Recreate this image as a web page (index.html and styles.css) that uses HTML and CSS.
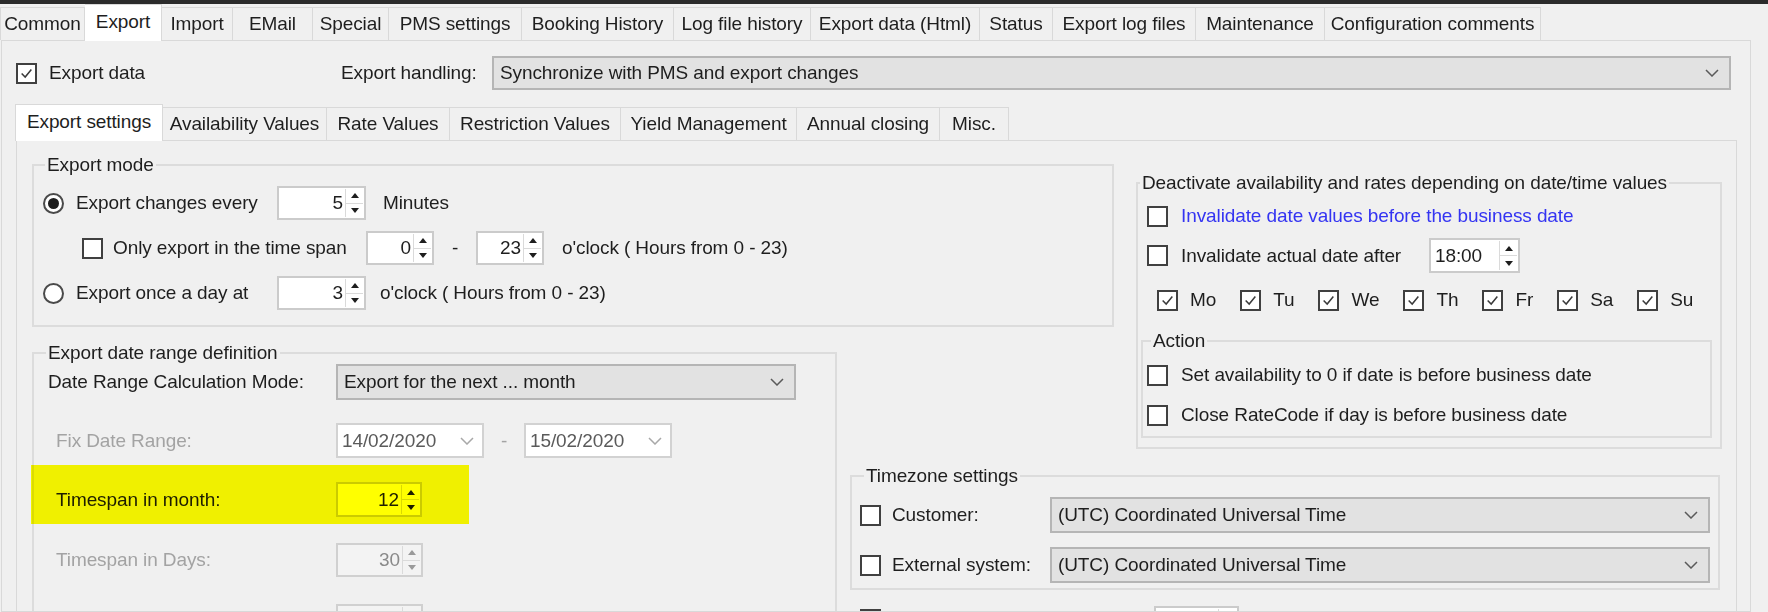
FILE: index.html
```html
<!DOCTYPE html>
<html>
<head>
<meta charset="utf-8">
<title>Export settings</title>
<link rel="stylesheet" href="styles.css">
</head>
<body>
<div class="topbar"></div>
<div class="tabs top">
  <div class="tab">Common</div>
  <div class="tab sel">Export</div>
  <div class="tab">Import</div>
  <div class="tab">EMail</div>
  <div class="tab">Special</div>
  <div class="tab">PMS settings</div>
  <div class="tab">Booking History</div>
  <div class="tab">Log file history</div>
  <div class="tab">Export data (Html)</div>
  <div class="tab">Status</div>
  <div class="tab">Export log files</div>
  <div class="tab">Maintenance</div>
  <div class="tab">Configuration comments</div>
</div>
<div class="outer">
  <div class="export-row">
    <div class="opt w-export"><span class="cb on"><svg viewBox="0 0 17 17"><path d="M3 8.5 L7 12.5 L14 4"/></svg></span><span>Export data</span></div>
    <span class="lbl-handling">Export handling:</span>
    <div class="combo grow"><span>Synchronize with PMS and export changes</span><svg class="chev" viewBox="0 0 14 8"><path d="M1 1 L7 7 L13 1"/></svg></div>
  </div>
  <div class="tabs sub">
    <div class="tab sel">Export settings</div>
    <div class="tab">Availability Values</div>
    <div class="tab">Rate Values</div>
    <div class="tab">Restriction Values</div>
    <div class="tab">Yield Management</div>
    <div class="tab">Annual closing</div>
    <div class="tab">Misc.</div>
  </div>
  <div class="inner">
    <div class="layout">
      <fieldset class="grp g-mode">
        <legend>Export mode</legend>
        <div class="body">
          <div class="line">
            <div class="opt w-mode"><span class="rb on"></span><span>Export changes every</span></div>
            <div class="spin w89"><span class="val">5</span><span class="arrows"><i class="up"></i><i class="dn"></i></span></div>
            <span class="after-min">Minutes</span>
          </div>
          <div class="line">
            <div class="opt w-span"><span class="cb"></span><span>Only export in the time span</span></div>
            <div class="spin w68"><span class="val">0</span><span class="arrows"><i class="up"></i><i class="dn"></i></span></div>
            <span class="dash">-</span>
            <div class="spin w68"><span class="val">23</span><span class="arrows"><i class="up"></i><i class="dn"></i></span></div>
            <span class="after-span">o'clock ( Hours from 0 - 23)</span>
          </div>
          <div class="line">
            <div class="opt w-mode"><span class="rb"></span><span>Export once a day at</span></div>
            <div class="spin w89"><span class="val">3</span><span class="arrows"><i class="up"></i><i class="dn"></i></span></div>
            <span class="after-day">o'clock ( Hours from 0 - 23)</span>
          </div>
        </div>
      </fieldset>

      <fieldset class="grp g-deact">
        <legend>Deactivate availability and rates depending on date/time values</legend>
        <div class="body">
          <div class="dline h26">
            <div class="opt"><span class="cb"></span><span class="blue">Invalidate date values before the business date</span></div>
          </div>
          <div class="dline h35 mt9">
            <div class="opt w-inv"><span class="cb"></span><span>Invalidate actual date after</span></div>
            <div class="spin w91 left"><span class="val">18:00</span><span class="arrows"><i class="up"></i><i class="dn"></i></span></div>
          </div>
          <div class="dline days h26 mt14">
            <div class="opt"><span class="cb on"><svg viewBox="0 0 17 17"><path d="M3 8.5 L7 12.5 L14 4"/></svg></span><span>Mo</span></div>
            <div class="opt"><span class="cb on"><svg viewBox="0 0 17 17"><path d="M3 8.5 L7 12.5 L14 4"/></svg></span><span>Tu</span></div>
            <div class="opt"><span class="cb on"><svg viewBox="0 0 17 17"><path d="M3 8.5 L7 12.5 L14 4"/></svg></span><span>We</span></div>
            <div class="opt"><span class="cb on"><svg viewBox="0 0 17 17"><path d="M3 8.5 L7 12.5 L14 4"/></svg></span><span>Th</span></div>
            <div class="opt"><span class="cb on"><svg viewBox="0 0 17 17"><path d="M3 8.5 L7 12.5 L14 4"/></svg></span><span>Fr</span></div>
            <div class="opt"><span class="cb on"><svg viewBox="0 0 17 17"><path d="M3 8.5 L7 12.5 L14 4"/></svg></span><span>Sa</span></div>
            <div class="opt"><span class="cb on"><svg viewBox="0 0 17 17"><path d="M3 8.5 L7 12.5 L14 4"/></svg></span><span>Su</span></div>
          </div>
          <fieldset class="grp g-action">
            <legend>Action</legend>
            <div class="body">
              <div class="aline h26">
                <div class="opt"><span class="cb"></span><span>Set availability to 0 if date is before business date</span></div>
              </div>
              <div class="aline h26 mt14">
                <div class="opt"><span class="cb"></span><span>Close RateCode if day is before business date</span></div>
              </div>
            </div>
          </fieldset>
        </div>
      </fieldset>

      <fieldset class="grp g-range">
        <legend>Export date range definition</legend>
        <div class="body">
          <div class="rline h36">
            <span class="w-rlbl">Date Range Calculation Mode:</span>
            <div class="combo w460"><span>Export for the next ... month</span><svg class="chev" viewBox="0 0 14 8"><path d="M1 1 L7 7 L13 1"/></svg></div>
          </div>
          <div class="rline h35 mt23">
            <span class="w-rlbl dis">Fix Date Range:</span>
            <div class="date"><span>14/02/2020</span><svg class="chev light" viewBox="0 0 14 8"><path d="M1 1 L7 7 L13 1"/></svg></div>
            <span class="dash dis">-</span>
            <div class="date"><span>15/02/2020</span><svg class="chev light" viewBox="0 0 14 8"><path d="M1 1 L7 7 L13 1"/></svg></div>
          </div>
          <div class="rline h35 mt24 hl">
            <span class="w-rlbl sub-lbl">Timespan in month:</span>
            <div class="spin w86"><span class="val">12</span><span class="arrows"><i class="up"></i><i class="dn"></i></span></div>
          </div>
          <div class="rline h34 mt26">
            <span class="w-rlbl dis">Timespan in Days:</span>
            <div class="spin w87 off"><span class="val">30</span><span class="arrows"><i class="up"></i><i class="dn"></i></span></div>
          </div>
          <div class="rline h34 mt27">
            <span class="w-rlbl"></span>
            <div class="spin w87 off"><span class="val"></span><span class="arrows"><i class="up"></i><i class="dn"></i></span></div>
          </div>
        </div>
      </fieldset>

      <fieldset class="grp g-tz">
        <legend>Timezone settings</legend>
        <div class="body">
          <div class="tline">
            <div class="opt w-tz"><span class="cb"></span><span>Customer:</span></div>
            <div class="combo grow"><span>(UTC) Coordinated Universal Time</span><svg class="chev" viewBox="0 0 14 8"><path d="M1 1 L7 7 L13 1"/></svg></div>
          </div>
          <div class="tline mt14">
            <div class="opt w-tz"><span class="cb"></span><span>External system:</span></div>
            <div class="combo grow"><span>(UTC) Coordinated Universal Time</span><svg class="chev" viewBox="0 0 14 8"><path d="M1 1 L7 7 L13 1"/></svg></div>
          </div>
        </div>
      </fieldset>

      <div class="g-extra">
        <div class="opt w-extra"><span class="cb"></span></div>
        <div class="spin w85"><span class="val"></span><span class="arrows"><i class="up"></i><i class="dn"></i></span></div>
      </div>
    </div>
  </div>
</div>
</body>
</html>
```

FILE: styles.css
```css
* { box-sizing: border-box; }
html, body { margin: 0; padding: 0; }
body {
  width: 1768px;
  height: 612px;
  overflow: hidden;
  background: #f0f0f0;
  font-family: "Liberation Sans", Arial, sans-serif;
  font-size: 19px;
  line-height: 22px;
  letter-spacing: -0.1px;
  color: #1e1e1e;
}

.topbar { height: 4px; background: #2b2b2b; }

/* tab strips */
.tabs { display: flex; align-items: flex-end; }
.tabs.top { height: 36px; }
.tabs.sub { height: 37px; margin-top: 13px; margin-left: -1px; }
.tab {
  height: 33px;
  border: 1px solid #d9d9d9;
  border-left: 0;
  border-bottom: 0;
  background: #f0f0f0;
  display: flex;
  align-items: center;
  justify-content: center;
  white-space: nowrap;
  flex: none;
}
.tab:first-child { border-left: 1px solid #d9d9d9; }
.tab.sel {
  height: 37px;
  margin-bottom: -1px;
  background: #ffffff;
  position: relative;
  z-index: 1;
  padding-bottom: 3px;
}
.top .tab:nth-child(1) { width: 85px; }
.top .tab:nth-child(2) { width: 77px; }
.top .tab:nth-child(3) { width: 71px; }
.top .tab:nth-child(4) { width: 80px; }
.top .tab:nth-child(5) { width: 76px; }
.top .tab:nth-child(6) { width: 133px; }
.top .tab:nth-child(7) { width: 152px; }
.top .tab:nth-child(8) { width: 137px; }
.top .tab:nth-child(9) { width: 169px; }
.top .tab:nth-child(10) { width: 73px; }
.top .tab:nth-child(11) { width: 143px; }
.top .tab:nth-child(12) { width: 129px; }
.top .tab:nth-child(13) { width: 216px; }

.sub .tab:nth-child(1) { width: 148px; }
.sub .tab:nth-child(2) { width: 164px; }
.sub .tab:nth-child(3) { width: 123px; }
.sub .tab:nth-child(4) { width: 171px; }
.sub .tab:nth-child(5) { width: 176px; }
.sub .tab:nth-child(6) { width: 143px; }
.sub .tab:nth-child(7) { width: 69px; }

/* pages */
.outer {
  margin-left: 1px;
  width: 1750px;
  height: 572px;
  border: 1px solid #d9d9d9;
  background: #f0f0f0;
  padding: 15px 19px 0 14px;
  overflow: hidden;
}
.export-row { display: flex; align-items: center; height: 34px; }
.w-export { width: 325px; gap: 11px; }
.lbl-handling { width: 151px; white-space: nowrap; }

.inner {
  width: 1721px;
  height: 480px;
  border: 1px solid #d9d9d9;
  background: #f0f0f0;
  padding: 13px 14px 0 15px;
  overflow: hidden;
}

.layout {
  display: grid;
  grid-template-columns: 805px 13px 264px 22px 586px;
  grid-template-rows: 173px 128px 135px auto;
}

/* group boxes */
.grp {
  margin: 0;
  padding: 0;
  min-width: 0;
  border: 2px solid #dcdcdc;
}
.grp legend { padding: 0 2px; line-height: 22px; white-space: nowrap; }

.g-mode { grid-column: 1 / 4; grid-row: 1; }
.g-mode legend { margin-left: 11px; }
.g-mode > .body { padding: 10px 0 0 9px; display: flex; flex-direction: column; gap: 11px; }

.g-deact { grid-column: 5; grid-row: 1 / 3; align-self: start; margin-top: 18px; }
.g-deact legend { margin-left: 2px; }
.g-deact > .body { padding: 9px 8px 9px 3px; }

.g-action { margin-top: 17px; }
.g-action legend { margin-left: 8px; }
.g-action > .body { padding: 10px 0 8px 4px; }

.g-range { grid-column: 1; grid-row: 2 / 5; align-self: start; margin-top: 15px; }
.g-range legend { margin-left: 12px; }
.g-range > .body { padding: 0 0 20px 14px; }

.g-tz { grid-column: 3 / 6; grid-row: 3; align-self: start; margin: 10px 2px 0 0; }
.g-tz legend { margin-left: 12px; }
.g-tz > .body { padding: 10px 8px 5px 8px; }

.g-extra {
  grid-column: 3 / 6;
  grid-row: 4;
  margin-top: 16px;
  padding-left: 10px;
  display: flex;
  align-items: flex-start;
  height: 36px;
}
.g-extra .cb { margin-top: 3px; }
.w-extra { width: 294px; }

/* rows */
.line, .dline, .aline, .rline, .tline { display: flex; align-items: center; }
.line { height: 34px; }
.dline { padding-left: 6px; }
.tline { height: 36px; }
.h26 { height: 26px; }
.h34 { height: 34px; }
.h35 { height: 35px; }
.h36 { height: 36px; }
.mt9 { margin-top: 9px; }
.mt14 { margin-top: 14px; }
.mt23 { margin-top: 23px; }
.mt24 { margin-top: 24px; }
.mt26 { margin-top: 26px; }
.mt27 { margin-top: 27px; }

.days { padding-left: 16px; gap: 24px; }

.opt { display: flex; align-items: center; gap: 12px; flex: none; white-space: nowrap; }
.w-mode { width: 234px; }
.w-span { width: 284px; margin-left: 39px; gap: 10px; }
.w-inv { width: 282px; gap: 13px; }
.g-deact .opt { gap: 13px; }
.days .opt { gap: 12px; }
.w-tz { width: 190px; gap: 11px; }

.after-min { margin-left: 17px; }
.after-span { margin-left: 18px; }
.after-day { margin-left: 14px; }
.dash { width: 42px; text-align: center; flex: none; }
.rline .dash { width: 40px; }

.w-rlbl { width: 288px; flex: none; white-space: nowrap; }
.dis { color: #a3a3a3; padding-left: 8px; }
.rline .dash.dis { padding-left: 0; }
.sub-lbl { padding-left: 8px; }

.blue { color: #3434f2; }

/* highlight annotation drawn over the row */
.hl { position: relative; }
.hl::after {
  content: "";
  position: absolute;
  left: -17px;
  top: -17px;
  width: 438px;
  height: 59px;
  background: #ffff00;
  mix-blend-mode: multiply;
  pointer-events: none;
}

/* controls */
.cb {
  width: 21px;
  height: 21px;
  border: 2px solid #404040;
  background: #ffffff;
  flex: none;
  display: flex;
  align-items: center;
  justify-content: center;
}
.cb svg { width: 15px; height: 15px; }
.cb path { fill: none; stroke: #3a3a3a; stroke-width: 1.7; }

.rb {
  width: 21px;
  height: 21px;
  border-radius: 50%;
  border: 2px solid #4a4a4a;
  background: #ffffff;
  flex: none;
  display: flex;
  align-items: center;
  justify-content: center;
}
.rb.on::after {
  content: "";
  width: 11px;
  height: 11px;
  border-radius: 50%;
  background: #1e1e1e;
}

.combo {
  height: 34px;
  display: flex;
  align-items: center;
  justify-content: space-between;
  padding: 0 10px 0 6px;
  background: #e2e2e2;
  border: 2px solid #b5b5b5;
  white-space: nowrap;
  flex: none;
}
.tline .combo { height: 36px; }
.rline .combo { height: 36px; }
.grow { flex: 1; }
.w460 { width: 460px; }
.chev { width: 14px; height: 8px; flex: none; }
.chev path { fill: none; stroke: #5a5a5a; stroke-width: 1.5; }
.chev.light path { stroke: #a8a8a8; }

.date {
  width: 148px;
  height: 35px;
  flex: none;
  display: flex;
  align-items: center;
  justify-content: space-between;
  padding: 0 8px 0 4px;
  background: #ffffff;
  border: 2px solid #d2d2d2;
  color: #5a5a5a;
}

.spin {
  display: flex;
  height: 34px;
  flex: none;
  background: #ffffff;
  border: 2px solid #cbcbcb;
  padding: 1px;
}
.dline .spin { height: 35px; }
.rline .spin { height: 100%; }
.spin .val { flex: 1; text-align: right; padding-right: 2px; align-self: center; }
.spin.left .val { text-align: left; padding-left: 3px; }
.spin.off { background: #f3f3f3; border-color: #d0d0d0; color: #8a8a8a; }
.w85 { width: 85px; }
.w86 { width: 86px; }
.w87 { width: 87px; }
.w89 { width: 89px; }
.w91 { width: 91px; }
.w68 { width: 68px; }

.arrows {
  width: 18px;
  flex: none;
  display: flex;
  flex-direction: column;
  border-left: 1px solid #dadada;
}
.arrows i {
  flex: 1;
  display: flex;
  align-items: center;
  justify-content: center;
}
.arrows i + i { border-top: 1px solid #dadada; }
.arrows .up::before {
  content: "";
  border-left: 4.5px solid transparent;
  border-right: 4.5px solid transparent;
  border-bottom: 5px solid #1e1e1e;
}
.arrows .dn::before {
  content: "";
  border-left: 4.5px solid transparent;
  border-right: 4.5px solid transparent;
  border-top: 5px solid #1e1e1e;
}
.spin.off .up::before { border-bottom-color: #9a9a9a; }
.spin.off .dn::before { border-top-color: #9a9a9a; }
```
